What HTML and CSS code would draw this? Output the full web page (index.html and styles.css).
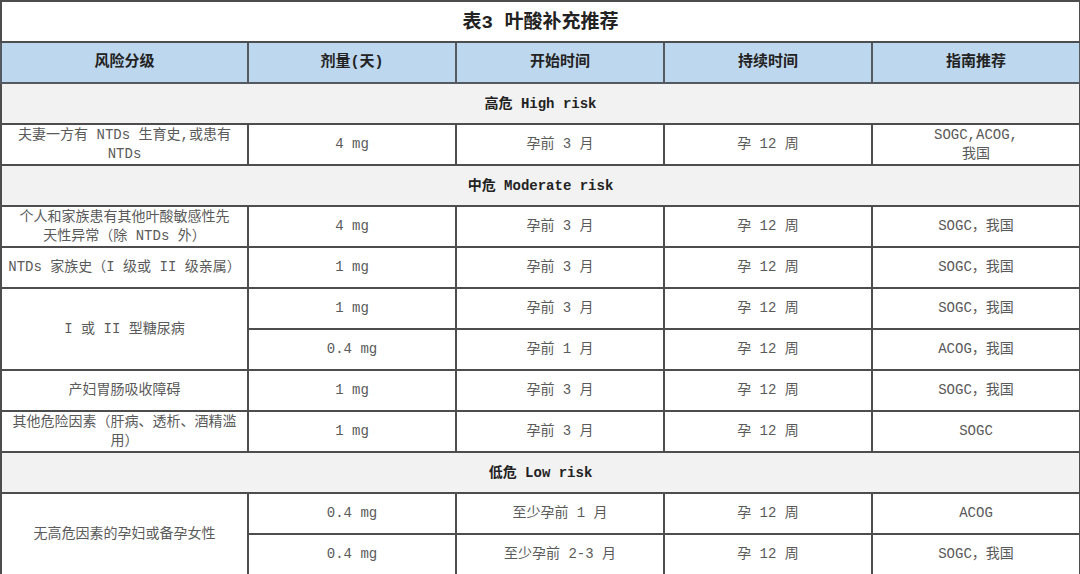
FILE: index.html
```html
<!DOCTYPE html>
<html lang="zh">
<head>
<meta charset="utf-8">
<link rel="stylesheet" href="styles.css">
</head>
<body>
<table class="tbl">
  <colgroup>
    <col class="c1"><col class="c2"><col class="c2"><col class="c2"><col class="c2">
  </colgroup>
  <tr class="title"><td colspan="5">表3 叶酸补充推荐</td></tr>
  <tr class="head"><th>风险分级</th><th>剂量(天)</th><th>开始时间</th><th>持续时间</th><th>指南推荐</th></tr>
  <tr class="sec"><td colspan="5">高危 High risk</td></tr>
  <tr><td>夫妻一方有 NTDs 生育史,或患有<br>NTDs</td><td>4 mg</td><td>孕前 3 月</td><td>孕 12 周</td><td>SOGC,ACOG,<br>我国</td></tr>
  <tr class="sec"><td colspan="5">中危 Moderate risk</td></tr>
  <tr><td>个人和家族患有其他叶酸敏感性先<br>天性异常（除 NTDs 外）</td><td>4 mg</td><td>孕前 3 月</td><td>孕 12 周</td><td>SOGC，我国</td></tr>
  <tr><td>NTDs 家族史（I 级或 II 级亲属）</td><td>1 mg</td><td>孕前 3 月</td><td>孕 12 周</td><td>SOGC，我国</td></tr>
  <tr><td rowspan="2">I 或 II 型糖尿病</td><td>1 mg</td><td>孕前 3 月</td><td>孕 12 周</td><td>SOGC，我国</td></tr>
  <tr><td>0.4 mg</td><td>孕前 1 月</td><td>孕 12 周</td><td>ACOG，我国</td></tr>
  <tr><td>产妇胃肠吸收障碍</td><td>1 mg</td><td>孕前 3 月</td><td>孕 12 周</td><td>SOGC，我国</td></tr>
  <tr><td>其他危险因素（肝病、透析、酒精滥<br>用）</td><td>1 mg</td><td>孕前 3 月</td><td>孕 12 周</td><td>SOGC</td></tr>
  <tr class="sec"><td colspan="5">低危 Low risk</td></tr>
  <tr><td rowspan="2">无高危因素的孕妇或备孕女性</td><td>0.4 mg</td><td>至少孕前 1 月</td><td>孕 12 周</td><td>ACOG</td></tr>
  <tr><td>0.4 mg</td><td>至少孕前 2-3 月</td><td>孕 12 周</td><td>SOGC，我国</td></tr>
</table>
</body>
</html>
```

FILE: styles.css
```css
html, body {
  margin: 0;
  padding: 0;
  background: #ffffff;
}
.tbl {
  width: 1080px;
  height: 574px;
  border-collapse: collapse;
  table-layout: fixed;
  font-family: "Liberation Mono", "Noto Sans CJK SC", monospace;
  font-size: 14px;
  line-height: 19px;
  color: #5a5a5a;
  border: 2px solid #222222;
}
.c1 { width: 247px; }
.c2 { width: 208px; }
.tbl tr { height: 41px; }
.tbl td, .tbl th {
  border: 2px solid #4d4d4d;
  text-align: center;
  vertical-align: middle;
  padding: 0 4px;
  white-space: nowrap;
}
.title td {
  font-size: 19px;
  font-weight: bold;
  color: #222222;
  background: #ffffff;
  padding-top: 4px;
}
.head th {
  background: #bdd7ee;
  font-size: 15px;
  font-weight: bold;
  color: #222222;
  border-color: #555a62;
}
.sec td {
  background: #f2f2f2;
  font-size: 14px;
  font-weight: bold;
  color: #222222;
  padding-top: 2px;
}
```
